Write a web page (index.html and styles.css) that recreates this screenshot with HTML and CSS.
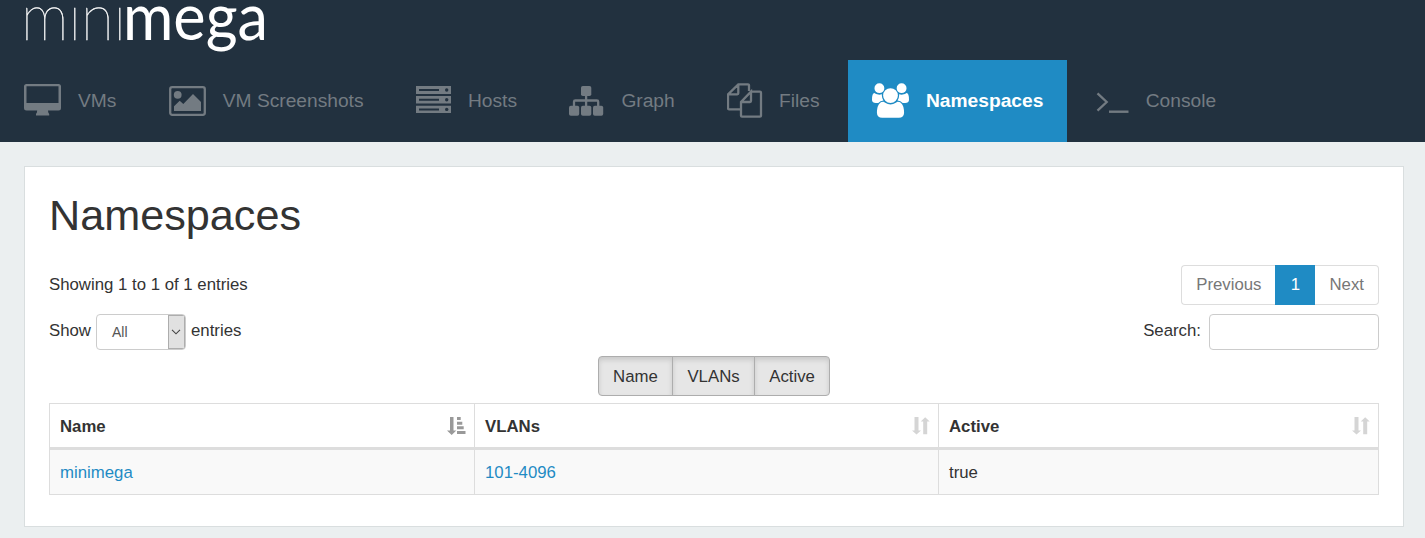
FILE: index.html
```
<!DOCTYPE html>
<html lang="en">
<head>
<meta charset="utf-8">
<title>minimega - Namespaces</title>
<link rel="stylesheet" href="styles.css">
</head>
<body>
<header class="header">
  <svg class="logo" width="260" height="60" viewBox="0 0 260 60">
    <text class="logo-thin" x="-3" y="40" textLength="105" lengthAdjust="spacingAndGlyphs">mini</text>
    <text class="logo-bold" x="99" y="40" textLength="145" lengthAdjust="spacingAndGlyphs">mega</text>
  </svg>
  <nav class="nav">
    <a class="nav-item"><span class="icon w54"><svg width="37" height="35" viewBox="0 0 37 35"><path fill-rule="evenodd" d="M2.500 1h32a2.500 2.500 0 0 1 2.500 2.500v21.500a2.500 2.500 0 0 1-2.500 2.500h-10.500q0 2 1.200 3.500v1.500h-13.200v-1.500q1.200-1.500 1.200-3.500h-10.700a2.500 2.500 0 0 1-2.500-2.500v-21.500a2.500 2.500 0 0 1 2.500-2.500zM2.500 3.300v16.700h32v-16.700z"/></svg></span>VMs</a>
    <a class="nav-item"><span class="icon w54"><svg width="37" height="35" viewBox="0 0 37 35"><rect class="line" x="1.200" y="4.200" width="34.600" height="27.600" rx="2"/><circle cx="8.700" cy="11.800" r="3.900"/><path d="M5 28v-4.700l5.700-5.600 3.600 3.300 9.700-10 8 8v9z"/></svg></span>VM Screenshots</a>
    <a class="nav-item"><span class="icon w52"><svg width="35" height="35" viewBox="0 0 35 35"><path d="M0 3h35v8H0zM0 13h35v7.500H0zM0 22.700h35v7.300H0z"/><path class="cut" d="M3 6h20v2H3zM3 15.700h20v2H3zM3 25.400h20v2H3z"/><circle class="cut" cx="30.700" cy="7" r="1.700"/><circle class="cut" cx="30.700" cy="16.700" r="1.700"/><circle class="cut" cx="30.700" cy="26.400" r="1.700"/></svg></span>Hosts</a>
    <a class="nav-item"><span class="icon w52"><svg width="35" height="35" viewBox="0 0 35 35"><rect x="12" y="3" width="10.300" height="10" rx="1.800"/><rect x="0" y="22.800" width="10.200" height="10" rx="1.800"/><rect x="12" y="22.800" width="10.300" height="10" rx="1.800"/><rect x="24" y="22.800" width="10.200" height="10" rx="1.800"/><path class="line" stroke-width="2" d="M17.100 12v12M5 24v-5.200q0-1.300 1.300-1.300h21.600q1.300 0 1.300 1.300V24"/></svg></span>Graph</a>
    <a class="nav-item"><span class="icon w52"><svg width="36" height="35" viewBox="0 0 36 35"><path class="line" stroke-width="2.200" d="M22 8V2.300q0-1-1-1H11.300L1 11.300v14q0 1 1 1h12M11.300 1.300V10.300q0 1-1 1H1M24 8.700h9q1 0 1 1v23q0 1-1 1H15q-1 0-1-1V19L24 8.700V18q0 1-1 1h-9"/></svg></span>Files</a>
    <a class="nav-item active"><span class="icon w54"><svg width="37" height="35" viewBox="0 0 1920 1792"><path d="M593 896q-162 5-265 128h-134q-82 0-138-40.500t-56-118.500q0-353 124-353 6 0 43.500 21t97.500 42.500 119 21.500q67 0 133-23-5 37-5 66 0 139 81 256zm1071 637q0 120-73 189.500t-194 69.500h-874q-121 0-194-69.500t-73-189.500q0-53 3.500-103.500t14-109 26.500-108.500 43-97.500 62-81 85.500-53.500 111.500-20q10 0 43 21.500t73 48 107 48 135 21.500 135-21.500 107-48 73-48 43-21.500q61 0 111.500 20t85.500 53.500 62 81 43 97.500 26.500 108.500 14 109 3.500 103.500zm-1024-1277q0 106-75 181t-181 75-181-75-75-181 75-181 181-75 181 75 75 181zm704 384q0 159-112.500 271.500t-271.500 112.500-271.500-112.500-112.500-271.500 112.500-271.500 271.500-112.500 271.500 112.500 112.500 271.500zm576 225q0 78-56 118.500t-138 40.500h-134q-103-123-265-128 81-117 81-256 0-29-5-66 66 23 133 23 59 0 119-21.500t97.500-42.500 43.500-21q124 0 124 353zm-128-609q0 106-75 181t-181 75-181-75-75-181 75-181 181-75 181 75 75 181z"/></svg></span>Namespaces</a>
    <a class="nav-item"><span class="icon w50"><svg width="34" height="35" viewBox="0 0 34 35"><path class="line" stroke-width="2.600" d="M1.500 10.300L10.700 19l-9.200 8.700"/><path d="M13 27.500h19.500v2.400H13z"/></svg></span>Console</a>
  </nav>
</header>
<main class="panel">
  <h1 class="title">Namespaces</h1>
  <div class="row row-info">
    <span>Showing 1 to 1 of 1 entries</span>
    <div class="pager"><span class="page">Previous</span><span class="page current">1</span><span class="page">Next</span></div>
  </div>
  <div class="row row-filter">
    <div class="length"><span class="label">Show</span> <span class="select"><span class="select-value">All</span><span class="select-arrow"><svg width="10" height="6" viewBox="0 0 10 6"><path d="M1 .8l4 4 4-4"/></svg></span></span> <span class="label">entries</span></div>
    <label class="search"><span class="label">Search:</span> <input class="search-input" type="text"></label>
  </div>
  <div class="toggles"><span class="toggle">Name</span><span class="toggle">VLANs</span><span class="toggle">Active</span></div>
  <table class="table">
    <colgroup><col class="col-name"><col class="col-vlans"><col class="col-active"></colgroup>
    <thead><tr>
      <th><div class="head"><span class="head-text">Name</span><svg class="sort sorted" width="19" height="18" viewBox="0 0 19 18"><path d="M3 0h3.500v13.500H9.300L4.700 18 0 13.500h3zM10 0h3.700v3H10zM10 4.700h5.300v3H10zM10 9.300h6.700v3H10zM10 14h8.500v3H10z"/></svg></div></th>
      <th><div class="head"><span class="head-text">VLANs</span><svg class="sort" width="18" height="18" viewBox="0 0 18 18"><path d="M2.500 0h4v13.500H9L4.500 17.600 0 13.500h2.500zM11.200 17.300V4.500H8.700L13.200.2l4.500 4.300h-2.500v12.800z"/></svg></div></th>
      <th><div class="head"><span class="head-text">Active</span><svg class="sort" width="18" height="18" viewBox="0 0 18 18"><path d="M2.500 0h4v13.500H9L4.500 17.600 0 13.500h2.500zM11.200 17.300V4.500H8.700L13.200.2l4.500 4.300h-2.500v12.800z"/></svg></div></th>
    </tr></thead>
    <tbody><tr><td><a class="link">minimega</a></td><td><a class="link">101-4096</a></td><td>true</td></tr></tbody>
  </table>
</main>
</body>
</html>
```
FILE: styles.css
```
* { box-sizing: border-box; }
body {
  margin: 0;
  height: 538px;
  overflow: hidden;
  background: #ebeff0;
  color: #333;
  font: 16.8px/24px "Liberation Sans", Arial, sans-serif;
}
.header { height: 142px; background: #22313f; }
.logo { display: block; margin-left: 24px; overflow: hidden; fill: #fff; }
.logo-thin { font: 100 65px Lato, sans-serif; stroke: #fff; stroke-width: .4; }
.logo-bold { font: 400 65px Lato, sans-serif; }
.nav { display: flex; gap: 4.4px; height: 82px; }
.nav-item {
  display: flex;
  align-items: center;
  padding: 0 24px;
  color: #737b82;
  font-size: 19.2px;
  white-space: nowrap;
}
.active { background: #1f8bc4; color: #fff; font-weight: bold; }
.icon { flex: none; height: 37px; }
.icon svg { display: block; fill: currentColor; }
.icon .line { fill: none; stroke: currentColor; stroke-width: 2.3; }
.icon .cut { fill: #22313f; }
.w50 { width: 50px; }
.w52 { width: 52px; }
.w54 { width: 54px; }
.panel {
  width: 1380px;
  height: 361px;
  margin: 24px 0 0 24px;
  padding: 24px;
  background: #fff;
  border: 1px solid #d9dedf;
}
.title { margin: 0; height: 74px; font-size: 43.2px; font-weight: normal; line-height: 48px; }
.row { display: flex; justify-content: space-between; align-items: center; }
.row-info { height: 40px; }
.row-filter { height: 36px; margin-top: 9px; }
.pager { display: flex; height: 40px; }
.page {
  padding: 7px 14px;
  border: 1px solid #ddd;
  color: #777;
}
.page:first-child { border-right: 0; border-radius: 4px 0 0 4px; }
.page:last-child { border-left: 0; border-radius: 0 4px 4px 0; }
.page.current { width: 40px; text-align: center; background: #1f8bc4; border-color: #1f8bc4; color: #fff; }
.length, .search { display: flex; align-items: center; }
.length { gap: 5px; }
.search { gap: 8px; }
.label { padding-bottom: 3px; }
.select {
  display: flex;
  width: 90px;
  height: 36px;
  border: 1px solid #ccc;
  border-radius: 4px;
  overflow: hidden;
}
.select-value { flex: 1; padding-left: 15px; color: #555; font-size: 14px; line-height: 34px; }
.select-arrow {
  display: flex;
  align-items: center;
  justify-content: center;
  width: 17px;
  background: #e1e1e1;
  border: 1px solid #adadad;
}
.select-arrow svg { fill: none; stroke: #444; stroke-width: 1.1; flex: none; }
.search-input { width: 170px; height: 36px; border: 1px solid #ccc; border-radius: 4px; background: #fff; }
.toggles { display: flex; justify-content: center; height: 40px; margin-top: 6px; }
.toggle {
  padding: 8px 14.3px 6px;
  border: 1px solid #adadad;
  background: #e6e6e6;
  box-shadow: inset 0 3px 5px rgba(0, 0, 0, .125);
}
.toggle + .toggle { margin-left: -1px; }
.toggle:first-child { border-radius: 4px 0 0 4px; }
.toggle:last-child { border-radius: 0 4px 4px 0; }
.table { width: 1330px; margin-top: 7px; border-collapse: separate; border-spacing: 0; table-layout: fixed; border: solid #ddd; border-width: 1px 0 0 1px; }
.col-name { width: 425px; }
.col-vlans { width: 464px; }
.table th, .table td { padding: 0 10px; text-align: left; border-right: 1px solid #ddd; }
.table th { height: 46px; border-bottom: 3px solid #ddd; }
.table td { height: 45px; padding-top: 2px; background: #f9f9f9; border-bottom: 1px solid #ddd; }
.head { display: flex; align-items: center; justify-content: space-between; }
.head-text { padding-top: 2px; }
.sort { fill: #d5d5d5; margin-right: -2px; }
.sorted { fill: #999; }
.link { color: #1f8bc4; }
```
